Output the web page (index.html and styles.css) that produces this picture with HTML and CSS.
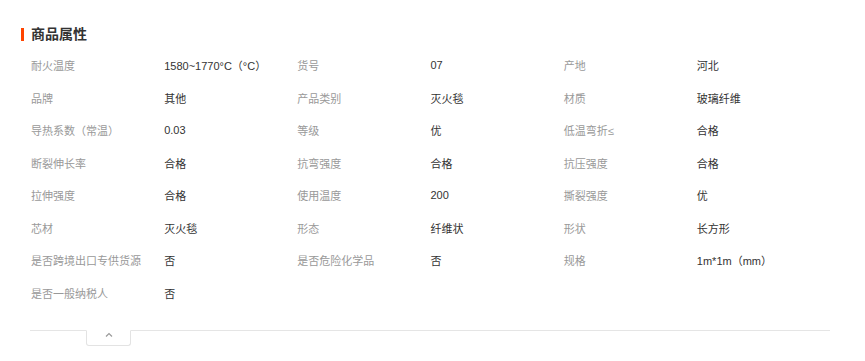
FILE: index.html
```html
<!DOCTYPE html>
<html lang="zh-CN">
<head>
<meta charset="utf-8">
<title>商品属性</title>
<link rel="stylesheet" href="styles.css">
</head>
<body>
<div class="section">
  <h2 class="title"><span class="bar"></span>商品属性</h2>
  <div class="grid">
    <div class="k">耐火温度</div><div class="v">1580~1770°C（°C）</div>
    <div class="k">货号</div><div class="v">07</div>
    <div class="k">产地</div><div class="v">河北</div>

    <div class="k">品牌</div><div class="v">其他</div>
    <div class="k">产品类别</div><div class="v">灭火毯</div>
    <div class="k">材质</div><div class="v">玻璃纤维</div>

    <div class="k">导热系数（常温）</div><div class="v">0.03</div>
    <div class="k">等级</div><div class="v">优</div>
    <div class="k">低温弯折≤</div><div class="v">合格</div>

    <div class="k">断裂伸长率</div><div class="v">合格</div>
    <div class="k">抗弯强度</div><div class="v">合格</div>
    <div class="k">抗压强度</div><div class="v">合格</div>

    <div class="k">拉伸强度</div><div class="v">合格</div>
    <div class="k">使用温度</div><div class="v">200</div>
    <div class="k">撕裂强度</div><div class="v">优</div>

    <div class="k">芯材</div><div class="v">灭火毯</div>
    <div class="k">形态</div><div class="v">纤维状</div>
    <div class="k">形状</div><div class="v">长方形</div>

    <div class="k">是否跨境出口专供货源</div><div class="v">否</div>
    <div class="k">是否危险化学品</div><div class="v">否</div>
    <div class="k">规格</div><div class="v">1m*1m（mm）</div>

    <div class="k">是否一般纳税人</div><div class="v">否</div>
  </div>
  <div class="divider">
    <div class="toggle">
      <svg width="8" height="5" viewBox="0 0 8 5"><path d="M1 4.5 L4 1.5 L7 4.5" fill="none" stroke="#9a9a9a" stroke-width="1.2"/></svg>
    </div>
  </div>
</div>
</body>
</html>
```
FILE: styles.css
```css
html, body {
  margin: 0;
  padding: 0;
  background: #fff;
}
body {
  font-family: "Liberation Sans", "Noto Sans CJK SC", sans-serif;
  font-size: 11px;
  color: #333;
}
.section {
  width: 800px;
  margin-left: 30px;
  padding-top: 24px;
}
.title {
  margin: 0 0 0 -9px;
  height: 20px;
  line-height: 20px;
  font-size: 14px;
  font-weight: bold;
  color: #333;
  display: flex;
  align-items: center;
}
.bar {
  width: 3px;
  height: 13px;
  background: #ff4400;
  margin-right: 7px;
}
.grid {
  margin-top: 5px;
  display: grid;
  grid-template-columns: repeat(6, 1fr);
  grid-auto-rows: 32.5px;
  align-items: center;
  padding-left: 1px;
}
.k {
  color: #999;
}
.v {
  color: #333;
}
.divider {
  margin-top: 21px;
  border-top: 1px solid #e5e5e5;
  position: relative;
  height: 16px;
}
.toggle {
  position: absolute;
  left: 56px;
  top: -1px;
  width: 45px;
  height: 16px;
  border: 1px solid #e3e3e3;
  border-top: 1px solid #fff;
  border-radius: 0 0 3px 3px;
  background: #fff;
  display: flex;
  justify-content: center;
  box-sizing: border-box;
}
.toggle svg {
  margin-top: 1px;
}
```
